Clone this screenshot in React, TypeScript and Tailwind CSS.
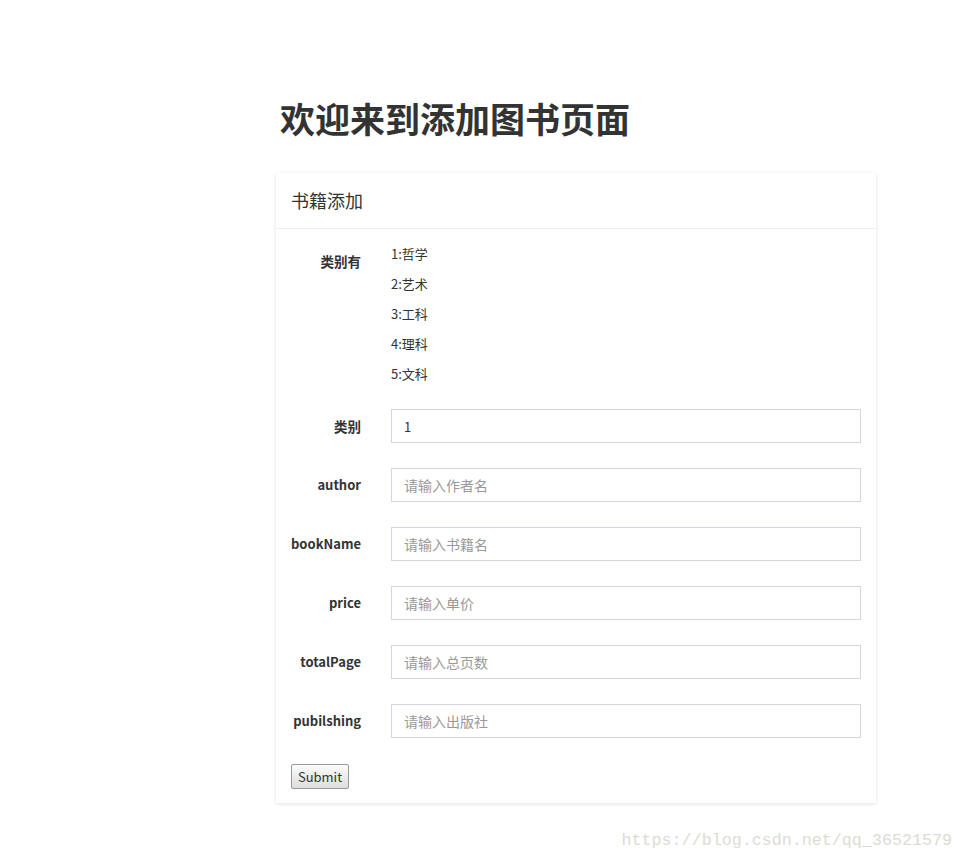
import React from 'react';

const categories = ['1:哲学', '2:艺术', '3:工科', '4:理科', '5:文科'];

const fields = [
    { label: 'author', placeholder: '请输入作者名' },
    { label: 'bookName', placeholder: '请输入书籍名' },
    { label: 'price', placeholder: '请输入单价' },
    { label: 'totalPage', placeholder: '请输入总页数' },
    { label: 'pubilshing', placeholder: '请输入出版社' },
];

const font = { fontFamily: '"Noto Sans CJK SC", "Noto Sans", sans-serif' };

const App: React.FC = () => {
    return (
        <div className="relative min-h-[859px] w-full bg-white text-[#333]" style={font}>
            <div className="ml-[276px] w-[600px] pt-[96px]">
                <h1 className="ml-[4px] text-[35px] font-bold leading-[44px] text-[#333]">
                    欢迎来到添加图书页面
                </h1>

                <div className="mt-[33px] bg-white shadow-[0_1px_4px_rgba(0,0,0,0.12)]">
                    <div className="flex h-[56px] items-center border-b border-[#eeeeee] px-[15px]">
                        <span className="text-[18px] font-normal text-[#333]">书籍添加</span>
                    </div>

                    <div className="px-[15px] pb-[14px] pt-[10px]">
                        <div className="flex">
                            <div className="w-[70px] pt-[12px] text-right text-[13.5px] font-bold leading-[20px]">
                                类别有
                            </div>
                            <ul className="ml-[30px]">
                                {categories.map((c) => (
                                    <li key={c} className="text-[13px] leading-[30px]">
                                        {c}
                                    </li>
                                ))}
                            </ul>
                        </div>

                        <div className="mt-[20px] flex items-center">
                            <label className="w-[70px] text-right text-[13.5px] font-bold">类别</label>
                            <input
                                type="text"
                                defaultValue="1"
                                className="ml-[30px] h-[34px] flex-1 border border-[#d3d6dd] px-[12px] text-[13px] text-[#333] outline-none"
                                style={font}
                            />
                        </div>

                        {fields.map((f) => (
                            <div key={f.label} className="mt-[25px] flex items-center">
                                <label className="w-[70px] whitespace-nowrap text-right text-[13px] font-bold">
                                    {f.label}
                                </label>
                                <input
                                    type="text"
                                    placeholder={f.placeholder}
                                    className="ml-[30px] h-[34px] flex-1 border border-[#d3d6dd] px-[12px] text-[14px] text-[#333] outline-none placeholder:text-[#999]"
                                    style={font}
                                />
                            </div>
                        ))}

                        <button
                            type="button"
                            className="mt-[26px] h-[25px] w-[58px] rounded-[2px] border border-[#9a9a9a] bg-gradient-to-b from-[#fbfbfb] to-[#dedede] text-[13px] text-[#333]"
                            style={font}
                        >
                            Submit
                        </button>
                    </div>
                </div>
            </div>

            <div
                className="absolute bottom-[6px] right-[11px] text-[16.7px] text-[#dcdcd4]"
                style={{ fontFamily: '"Liberation Mono", monospace' }}
            >
                https://blog.csdn.net/qq_36521579
            </div>
        </div>
    );
};

export default App;
